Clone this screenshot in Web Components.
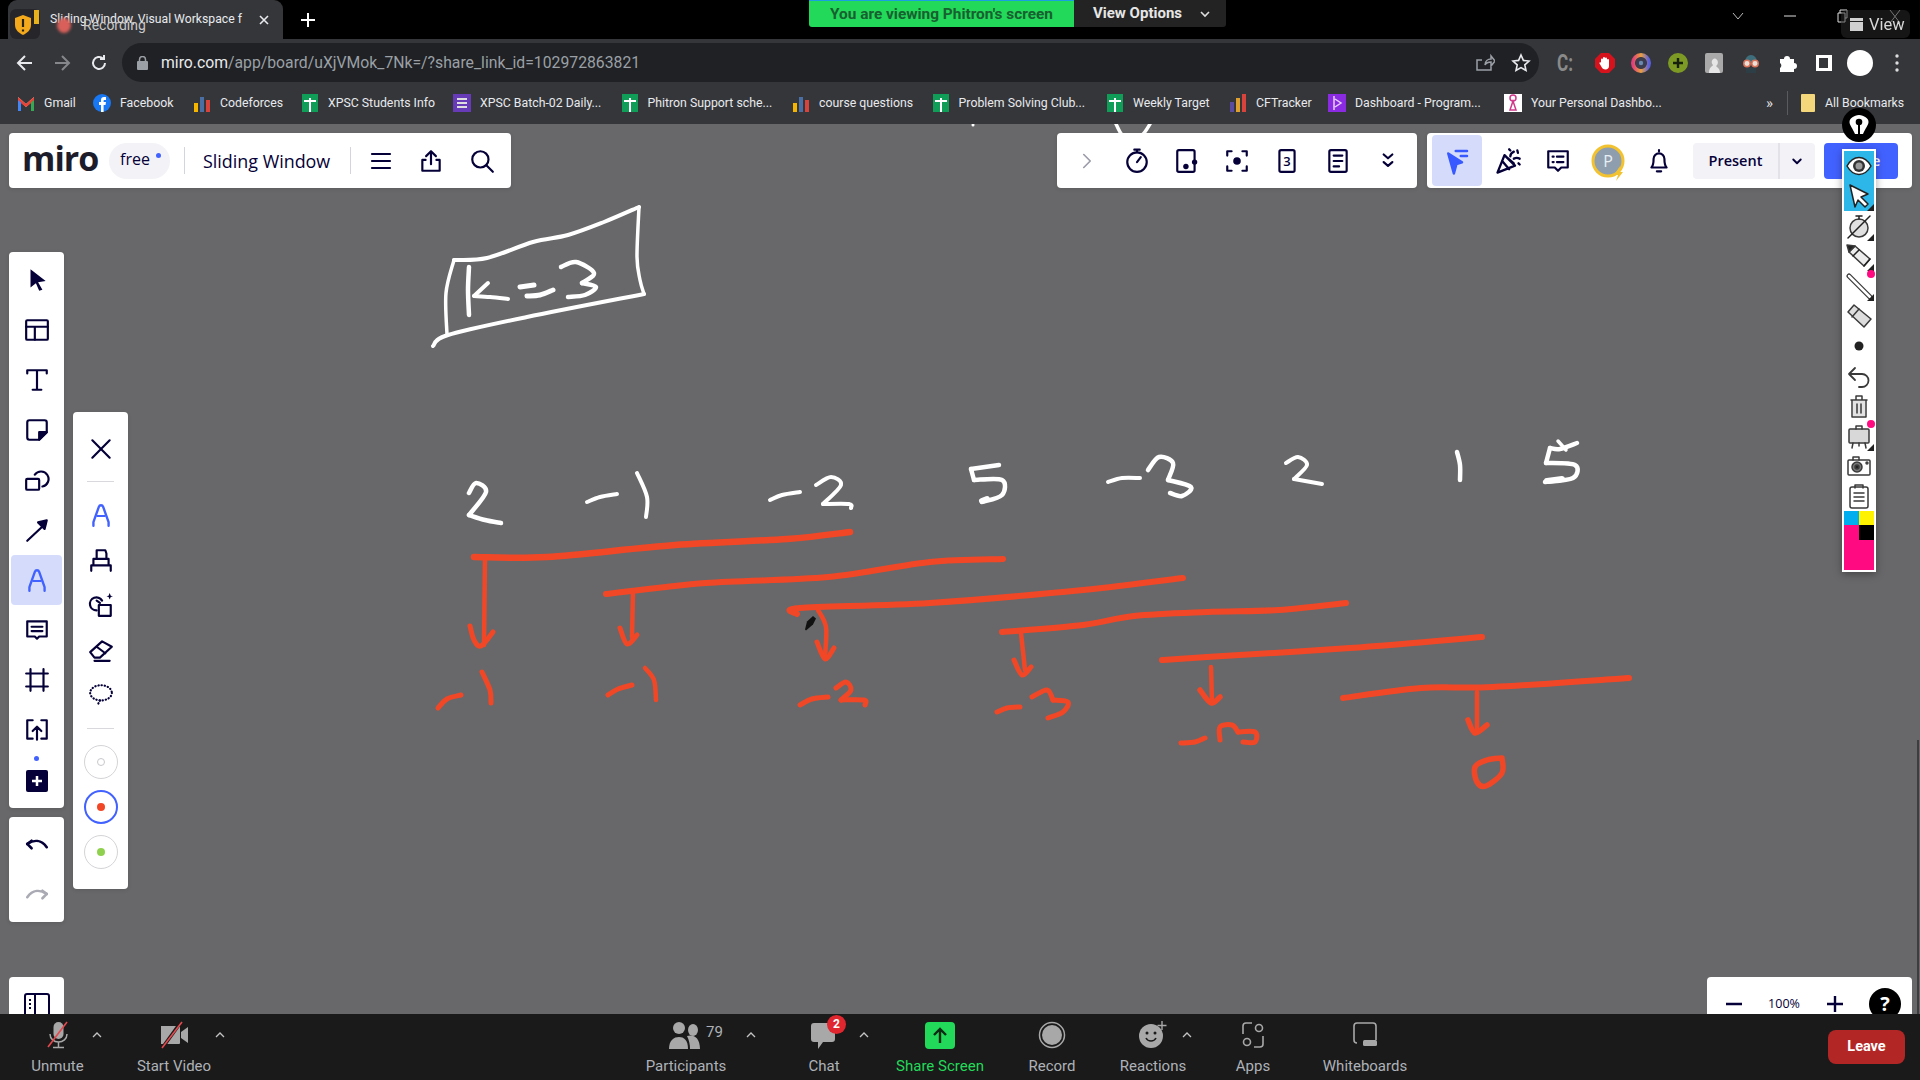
<!DOCTYPE html>
<html>
<head>
<meta charset="utf-8">
<title>Sliding Window</title>
<style>
  html, body { margin: 0; height: 100%; overflow: hidden; background: #000; }
  body { display: flex; flex-direction: column; width: 1920px; height: 1080px; position: relative; font-family: Roboto, "Liberation Sans", sans-serif; }
</style>
</head>
<body>
<chrome-tabstrip></chrome-tabstrip>
<chrome-toolbar></chrome-toolbar>
<chrome-bookmarks></chrome-bookmarks>
<miro-board>
  <board-sketch></board-sketch>
  <miro-title-panel></miro-title-panel>
  <miro-tools-panel></miro-tools-panel>
  <miro-share-panel></miro-share-panel>
  <miro-left-tools></miro-left-tools>
  <miro-pen-panel></miro-pen-panel>
  <miro-corner-panels></miro-corner-panels>
</miro-board>
<zoom-bar></zoom-bar>
<share-banner></share-banner>
<pen-toolbar></pen-toolbar>

<script>
const NAVY = "#050038";
const BLUE = "#4262ff";

// svg helper, all the miro icons are drawn on a 24 box
const svg = (body, size = 26, color = NAVY, sw = 2) =>
  `<svg width="${size}" height="${size}" viewBox="0 0 24 24" fill="none" stroke="${color}" stroke-width="${sw}" stroke-linecap="round" stroke-linejoin="round">${body}</svg>`;

// miro's pen glyph, a round arch with a bar and heavy feet
const penA = `<path d="M5 22v-3.500L10 4.500c.7-2 3.300-2 4 0l5 14V22" stroke="${BLUE}" stroke-width="2.200"/><path d="M8.500 13h7" stroke="${BLUE}" stroke-width="1.800"/>`;

class ChromeTabstrip extends HTMLElement {
  connectedCallback() {
    this.attachShadow({ mode: "open" }).innerHTML = `
      <style>
        :host { display: block; height: 39px; background: #000; position: relative; color: #e8eaed; font-size: 12.200px; flex: none; }
        .tab { position: absolute; left: 8px; top: 0; width: 275px; height: 39px; background: #35363a; border-radius: 9px 9px 0 0; }
        .title { position: absolute; left: 42px; top: 12px; white-space: nowrap; }
        .rec { position: absolute; left: 75px; top: 17px; color: #c9c9c9; font-size: 14px; }
        .dot { position: absolute; left: 49px; top: 18px; width: 14px; height: 15px; border-radius: 50%; background: #d9605a; filter: blur(1.500px); }
        .shield { position: absolute; left: 2px; top: 9px; width: 30px; height: 30px; background: #26262a; border-radius: 6px; }
        .x { position: absolute; left: 249px; top: 13px; }
        .plus { position: absolute; left: 300px; top: 12px; }
        .win { position: absolute; top: 9px; }
      </style>
      <div class="tab">
        <div class="title">Sliding Window, Visual Workspace f</div>
        <div class="dot"></div>
        <div class="rec">Recording</div>
        <div class="shield">
          <svg width="30" height="30" viewBox="0 0 30 30"><path d="M24 1h5v14h-5z" fill="#e8b21c"/><path d="M13 6l8 3v7c0 5-4 8-8 10-4-2-8-5-8-10V9z" fill="#f4a81c"/><path d="M13 10v8M13 20.500v2" stroke="#222" stroke-width="2.200"/></svg>
        </div>
        <svg class="x" width="14" height="14" viewBox="0 0 14 14" stroke="#e8eaed" stroke-width="1.600"><path d="M3 3l8 8M11 3l-8 8"/></svg>
      </div>
      <svg class="plus" width="16" height="16" viewBox="0 0 16 16" stroke="#fff" stroke-width="2"><path d="M8 1v14M1 8h14"/></svg>
      <svg class="win" style="left:1732px" width="12" height="14" viewBox="0 0 12 14" fill="none" stroke="#bbb"><path d="M1 4l5 6 5-6"/></svg>
      <svg class="win" style="left:1784px" width="12" height="14" viewBox="0 0 12 14" stroke="#ddd"><path d="M0 7h12"/></svg>
      <svg class="win" style="left:1837px" width="12" height="14" viewBox="0 0 12 14" fill="none" stroke="#ddd"><path d="M1 4h7v9H1zM3 4V1h7v8H8"/></svg>
      <svg class="win" style="left:1889px" width="12" height="15" viewBox="0 0 12 15" stroke="#bbb"><path d="M1 1l10 13M11 1L1 14"/></svg>
    `;
  }
}

class ChromeToolbar extends HTMLElement {
  connectedCallback() {
    const ext = [
      `<text x="-1" y="18" font-size="23" font-weight="700" fill="#8a8a8a" font-family="Roboto" textLength="16" lengthAdjust="spacingAndGlyphs">C:</text>`,
      `<path d="M6 0h8l6 6v8l-6 6H6l-6-6V6z" fill="#d6131d"/><path d="M6 9V6.500a1 1 0 012 0V5a1 1 0 012 0v.500a1 1 0 012 0V7a1 1 0 012 0v6c0 2-1.500 3.500-3.500 3.500S7 15.500 6 13l-1.500-2.500c-.500-1 .800-1.800 1.500-.800z" fill="#fff"/>`,
      `<circle cx="10" cy="10" r="8" fill="none" stroke="url(#g)" stroke-width="4"/><circle cx="10" cy="10" r="5.500" fill="#3c3c50"/><circle cx="10" cy="10" r="2.200" fill="#6a8ab0"/>`,
      `<circle cx="10" cy="10" r="10" fill="#7d9a24"/><path d="M10 5v10M5 10h10" stroke="#16200a" stroke-width="2.400"/>`,
      `<rect x="1" y="0" width="18" height="20" rx="2" fill="#a9a9a9"/><path d="M5 20c0-6 3-6 4-8-3-3 0-8 3-6 3 2 2 6 0 7 2 2 4 3 4 7z" fill="#e6e6e6"/>`,
      `<path d="M4 9a6 7 0 0112 0z" fill="#3e6e7c"/><circle cx="6" cy="10.500" r="3.200" fill="#e8e0d8" stroke="#d9725a" stroke-width="1.500"/><circle cx="14" cy="10.500" r="3.200" fill="#e8e0d8" stroke="#d9725a" stroke-width="1.500"/><path d="M5 15h10v5H5z" fill="#2e3e46"/>`,
      `<path d="M3 6h4a3 3 0 016 0h4v4a3 3 0 010 6v3H3v-4a3 3 0 000-5z" fill="#fff"/>`,
      `<rect x="2" y="2" width="16" height="16" fill="#fff"/><rect x="5" y="5" width="9" height="10" fill="#35363a"/>`,
      `<circle cx="10" cy="10" r="13" fill="#fff"/>`,
      `<circle cx="10" cy="3" r="1.700" fill="#ddd"/><circle cx="10" cy="10" r="1.700" fill="#ddd"/><circle cx="10" cy="17" r="1.700" fill="#ddd"/>`,
    ];
    this.attachShadow({ mode: "open" }).innerHTML = `
      <style>
        :host { display: flex; align-items: center; height: 43px; background: #35363a; flex: none; box-sizing: border-box; padding: 4px 0 0 6px; }
        .nav { width: 37px; flex: none; display: flex; justify-content: center; }
        .url { flex: none; margin-left: 5px; width: 1417px; height: 39px; border-radius: 20px; background: #202124; display: flex; align-items: center; box-sizing: border-box; padding: 0 15px; font-size: 15.750px; color: #9aa0a6; white-space: nowrap; }
        .url b { font-weight: 400; color: #e8eaed; }
        .url svg.lock { margin-right: 13px; flex: none; }
        .end { margin-left: auto; display: flex; gap: 16.500px; align-items: center; margin-right: -7px; }
        .exts { display: flex; flex: none; margin-left: 19px; gap: 16.500px; }
        .exts svg { overflow: visible; display: block; }
      </style>
      <div class="nav"><svg width="18" height="18" viewBox="0 0 18 18" fill="none" stroke="#e8eaed" stroke-width="2"><path d="M16 9H2M9 2L2 9l7 7"/></svg></div>
      <div class="nav"><svg width="18" height="18" viewBox="0 0 18 18" fill="none" stroke="#85878b" stroke-width="2"><path d="M2 9h14M9 2l7 7-7 7"/></svg></div>
      <div class="nav"><svg width="18" height="18" viewBox="0 0 18 18" fill="none" stroke="#e8eaed" stroke-width="2"><path d="M15 9a6 6 0 11-2-4.500M14 1v4h-4"/></svg></div>
      <div class="url">
        <svg class="lock" width="11" height="14" viewBox="0 0 11 14" fill="#9aa0a6"><rect x="0" y="5" width="11" height="9" rx="1"/><path d="M2.500 5V3.500a3 3 0 016 0V5" fill="none" stroke="#9aa0a6" stroke-width="1.500"/></svg>
        <span><b>miro.com</b>/app/board/uXjVMok_7Nk=/?share_link_id=102972863821</span>
        <div class="end">
          <svg width="20" height="20" viewBox="0 0 20 20" fill="none" stroke="#9aa0a6" stroke-width="1.500"><path d="M16 12v5H2V7h5M10 12c0-4 3-6 6-6V3l4 5-4 5V9c-3 0-5 1-6 3z"/></svg>
          <svg width="20" height="20" viewBox="0 0 20 20" fill="none" stroke="#e8eaed" stroke-width="1.600"><path d="M10 2l2.400 5.400 5.600.6-4.200 3.800 1.200 5.700L10 14.600 5 17.500l1.200-5.700L2 8l5.600-.6z"/></svg>
        </div>
      </div>
      <div class="exts">
        <svg width="20" height="20"><defs><linearGradient id="g"><stop offset="0" stop-color="#e0407a"/><stop offset=".5" stop-color="#e8a040"/><stop offset="1" stop-color="#5a60e0"/></linearGradient></defs>${ext[0]}</svg>
        ${ext.slice(1).map((e) => `<svg width="20" height="20">${e}</svg>`).join("")}
      </div>
    `;
  }
}

class ChromeBookmarks extends HTMLElement {
  connectedCallback() {
    const sheet = `<rect x="1" width="16" height="18" fill="#0f9d58"/><path d="M9 4v14M3 7h12" stroke="#fff" stroke-width="2"/>`;
    const bars = `<rect x="1" y="9" width="4" height="9" fill="#f4b400"/><rect x="7" y="3" width="4" height="15" fill="#4a6fa5"/><rect x="13" y="6" width="4" height="12" fill="#d8433b"/>`;
    const icons = {
      gmail: `<path d="M1 17V3l8 7 8-7v14h-3V8l-5 5-5-5v9z" fill="#e0e0e0"/><path d="M1 3l8 7 8-7v4l-8 6-8-6z" fill="#ea4335"/><path d="M1 6l3 2.500V17H1z" fill="#4285f4"/><path d="M17 6l-3 2.500V17h3z" fill="#34a853"/>`,
      fb: `<circle cx="9" cy="9" r="9" fill="#1877f2"/><path d="M8 18v-7H6V8h2V6c0-2 1-3 3-3h2v3h-1.500c-.7 0-.9.400-.9 1v1H13l-.5 3h-1.900v7z" fill="#fff"/>`,
      sheet, bars,
      form: `<rect x="0" width="18" height="18" fill="#673ab7"/><path d="M4 5h10M4 9h10M4 13h10" stroke="#ddd" stroke-width="2"/>`,
      cf: `<rect x="1" y="8" width="4" height="10" fill="#5a4aa0"/><rect x="7" y="4" width="4" height="14" fill="#e0a030"/><rect x="13" y="0" width="4" height="18" fill="#d8433b"/>`,
      dash: `<rect width="18" height="18" fill="#8a2be2"/><path d="M6 2v14M7 5l6 4-6 4" stroke="#e8d0ff" stroke-width="1.500" fill="none"/>`,
      you: `<rect width="18" height="18" fill="#fff"/><circle cx="9" cy="4" r="3" fill="none" stroke="#d0388a" stroke-width="1.500"/><path d="M9 7l-3 9h6z" fill="none" stroke="#d0388a" stroke-width="1.500"/>`,
      folder: `<rect x="1" width="14" height="18" rx="1" fill="#f5d77b"/>`,
    };
    const items = [
      ["Gmail", "gmail", 76], ["Facebook", "fb", 100], ["Codeforces", "bars", 108],
      ["XPSC Students Info", "sheet", 152], ["XPSC Batch-02 Daily...", "form", 167.5],
      ["Phitron Support sche...", "sheet", 171.5], ["course questions", "bars", 139.6],
      ["Problem Solving Club...", "sheet", 174.4], ["Weekly Target", "sheet", 123],
      ["CFTracker", "cf", 99], ["Dashboard - Program...", "dash", 176], ["Your Personal Dashbo...", "you", 262],
    ];
    this.attachShadow({ mode: "open" }).innerHTML = `
      <style>
        :host { display: flex; align-items: center; height: 42px; background: #35363a; color: #e8eaed; font-size: 12.300px; padding-left: 17px; flex: none; white-space: nowrap; }
        .b { display: flex; align-items: center; gap: 9px; flex: none; }
        svg { flex: none; display: block; }
        .more { font-size: 15px; color: #ddd; width: 21px; flex: none; }
        .sep { width: 1px; height: 24px; background: #5a5b5f; margin-right: 12px; flex: none; }
      </style>
      ${items.map(([t, i, w]) => `<div class="b" style="width:${w}px"><svg width="18" height="18">${icons[i]}</svg><span>${t}</span></div>`).join("")}
      <div class="more">»</div><div class="sep"></div>
      <div class="b"><svg width="16" height="18">${icons.folder}</svg><span>All Bookmarks</span></div>
    `;
  }
}

class MiroBoard extends HTMLElement {
  connectedCallback() {
    this.attachShadow({ mode: "open" }).innerHTML = `
      <style>
        :host { display: block; flex: 1; position: relative; overflow: hidden; background: #68686a; }
        .scroll { position: absolute; right: 1px; top: 616px; width: 2px; height: 274px; background: #3d3d3f; }
      </style>
      <slot></slot><div class="scroll"></div>
    `;
  }
}

// freehand ink of the board, stored as the sampled pen points in page coordinates
class BoardSketch extends HTMLElement {
  connectedCallback() {
    const W = "#fff", R = "#f24726";
    const strokes = [
      [W, 4, [[433,346],[448,335],[527,317],[644,294]]],
      [W, 3.5, [[644,294],[640,280],[637,257],[639,207]]],
      [W, 4, [[639,207],[604,222],[568,235],[533,242],[487,258],[454,260]]],
      [W, 3.5, [[454,260],[446,293],[447,335]]],
      [W, 4.5, [[469,267],[468,290],[469,315]]], [W, 4, [[488,283],[474,296]]], [W, 4, [[474,296],[490,297],[508,299]]],
      [W, 5, [[520,287],[534,285]]], [W, 5, [[527,296],[540,295],[553,290]]],
      [W, 4.5, [[561,267],[576,262],[594,273],[582,283]]], [W, 4.5, [[582,283],[596,287],[585,295],[568,297]]],
      [W, 4.5, [[469,493],[476,483],[486,492],[469,515]]], [W, 4.5, [[469,515],[485,520],[501,523]]],
      [W, 4, [[587,502],[600,497],[617,494]]], [W, 4, [[637,473],[647,497],[646,517]]],
      [W, 4, [[770,500],[782,495],[800,492]]], [W, 4, [[816,485],[831,477],[841,485],[823,504]]], [W, 4, [[823,504],[849,504],[851,508]]],
      [W, 4.5, [[999,465],[971,469]]], [W, 4.5, [[971,469],[974,480]]], [W, 4.5, [[974,480],[1002,480],[1002,495],[982,502]]], [W, 6, [[982,501],[987,499]]],
      [W, 4, [[1108,482],[1122,478],[1140,478]]], [W, 4.5, [[1148,470],[1159,457],[1173,463],[1168,480]]], [W, 4.5, [[1168,480],[1191,487],[1182,496],[1170,493]]],
      [W, 4, [[1286,463],[1298,457],[1307,465],[1294,479]]], [W, 4, [[1294,479],[1322,484]]],
      [W, 4.5, [[1457,452],[1460,465],[1460,480]]],
      [W, 4.5, [[1577,443],[1560,449],[1550,448]]], [W, 4.5, [[1550,448],[1546,463]]], [W, 4.5, [[1546,463],[1575,465],[1573,478],[1545,482]]], [W, 6, [[1547,481],[1562,479]]], [W, 3.5, [[1558,441],[1566,450]]],
      [W, 3.5, [[1116,124],[1122,135],[1130,139],[1142,135],[1150,124]]],
      [R, 6.5, [[474,557],[547,557],[675,545],[787,539],[850,532]]],
      [R, 4.5, [[485,557],[484,645]]], [R, 5, [[470,626],[474,640],[481,646],[493,632]]],
      [R, 6, [[606,594],[706,583],[828,577],[930,562],[1003,559]]],
      [R, 4.5, [[633,592],[632,637]]], [R, 5, [[620,628],[627,644],[637,635]]],
      [R, 6, [[797,614],[800,608],[930,603],[1083,590],[1183,578]]],
      [R, 4.5, [[818,610],[826,627],[825,657]]], [R, 5, [[817,642],[825,659],[834,648]]],
      [R, 6, [[1002,632],[1083,625],[1134,616],[1207,612],[1279,610],[1346,603]]],
      [R, 4.5, [[1021,633],[1025,670]]], [R, 5, [[1014,660],[1022,675],[1031,667]]],
      [R, 6, [[1162,660],[1207,657],[1350,648],[1482,637]]],
      [R, 4.5, [[1211,667],[1212,702]]], [R, 5.5, [[1200,690],[1211,703],[1220,697]]],
      [R, 6, [[1343,698],[1421,688],[1493,687],[1629,678]]],
      [R, 4.5, [[1477,692],[1477,732]]], [R, 5.5, [[1468,720],[1475,733],[1487,725]]],
      [R, 5.5, [[1502,758],[1487,760],[1475,767],[1477,782],[1486,786],[1502,773],[1502,758]]],
      [R, 5, [[438,708],[447,699],[461,695]]], [R, 5, [[482,672],[490,690],[491,703]]],
      [R, 5, [[608,695],[618,689],[632,685]]], [R, 4.5, [[645,668],[654,680],[656,700]]],
      [R, 5, [[800,705],[812,699],[828,697]]], [R, 5, [[836,688],[846,682],[851,690],[841,700]]], [R, 5, [[841,700],[864,700],[865,705]]],
      [R, 5, [[997,712],[1007,708],[1020,707]]], [R, 5, [[1032,697],[1047,690],[1053,700]]], [R, 5, [[1053,700],[1068,702],[1063,712],[1048,718]]],
      [R, 5, [[1181,743],[1195,742],[1205,738]]], [R, 5, [[1220,740],[1220,727],[1232,725],[1238,732]]], [R, 5, [[1238,732],[1255,732],[1255,742],[1243,742]]],
    ];
    const smooth = (p) => {
      let d = `M${p[0][0]} ${p[0][1]}`;
      for (let i = 0; i < p.length - 1; i++) {
        const a = p[i - 1] || p[i], b = p[i], c = p[i + 1], e = p[i + 2] || c;
        d += `C${b[0] + (c[0] - a[0]) / 6} ${b[1] + (c[1] - a[1]) / 6} ${c[0] - (e[0] - b[0]) / 6} ${c[1] - (e[1] - b[1]) / 6} ${c[0]} ${c[1]}`;
      }
      return d;
    };
    this.attachShadow({ mode: "open" }).innerHTML = `
      <style>:host { position: absolute; inset: 0; display: block; } svg { display: block; }</style>
      <svg width="1920" height="890" viewBox="0 124 1920 890" fill="none" stroke-linecap="round" stroke-linejoin="round">
        ${strokes.map(([c, w, p]) => `<path d="${smooth(p)}" stroke="${c}" stroke-width="${w}"/>`).join("")}
        <circle cx="973" cy="125" r="1.500" fill="#fff"/>
        <path d="M813 616l3 2.500-3 6-7 6-1-1 2-8z" fill="#111"/>
      </svg>
    `;
  }
}

const PANEL = `
  :host { position: absolute; display: flex; background: #fff; border-radius: 4px; box-sizing: border-box; color: ${NAVY}; font-family: "Open Sans", sans-serif; box-shadow: 0 1px 4px rgba(0,0,0,.12); }
  .c { display: flex; align-items: center; justify-content: center; flex: none; }
  svg { display: block; }
`;

class MiroTitlePanel extends HTMLElement {
  connectedCallback() {
    this.attachShadow({ mode: "open" }).innerHTML = `
      <style>${PANEL}
        :host { left: 9px; top: 9px; width: 502px; height: 55px; align-items: center; padding-left: 13px; }
        .logo { width: 74px; font-size: 34px; font-weight: 700; letter-spacing: -1px; line-height: 40px; color: #1c1c2b; margin-top: -5px; }
        .pill { margin-left: 13px; width: 61px; height: 36px; background: #f3f3f7; border-radius: 18px; box-sizing: border-box; padding-left: 11px; font-size: 16px; line-height: 33px; position: relative; }
        .pill i { position: absolute; left: 47px; top: 10px; width: 5px; height: 5px; border-radius: 50%; background: ${BLUE}; }
        .sep { width: 1px; height: 27px; background: #d4d4dc; margin-left: 14px; }
        .name { margin-left: 18px; width: 128px; font-size: 17.900px; white-space: nowrap; }
      </style>
      <div class="logo">miro</div>
      <div class="pill">free<i></i></div>
      <div class="sep"></div>
      <div class="name">Sliding Window</div>
      <div class="sep" style="margin-left:19px"></div>
      <div class="c" style="margin-left:18px;width:24px">${svg(`<path d="M3 5h18M3 12h18M3 19h18"/>`, 26, NAVY, 2.200)}</div>
      <div class="c" style="margin-left:25px;width:26px">${svg(`<path d="M12 15V3M7.500 7.500L12 3l4.500 4.500M7 11H4v10h16V11h-3"/>`)}</div>
      <div class="c" style="margin-left:25px;width:26px">${svg(`<circle cx="10.500" cy="10.500" r="7.500"/><path d="M16 16l6 6"/>`)}</div>
    `;
  }
}

class MiroToolsPanel extends HTMLElement {
  connectedCallback() {
    const ics = [
      `<path d="M9 9l6 6-6 6" transform="translate(0 -3)" stroke="#9a9aa8" stroke-width="1.500"/>`,
      `<circle cx="12" cy="13" r="9"/><path d="M12 4V1.500M9.500 1.500h5M12 13l3.500-4.500"/>`,
      `<rect x="3" y="2" width="16" height="20" rx="1.500"/><circle cx="19" cy="13" r="2.500" fill="${NAVY}" stroke="none"/><circle cx="11" cy="17" r="2.500" fill="${NAVY}" stroke="none"/>`,
      `<path d="M3 7V3h4M17 3h4v4M21 17v4h-4M7 21H3v-4"/><circle cx="12" cy="12" r="3.500" fill="${NAVY}" stroke="none"/>`,
      `<rect x="5" y="2" width="14" height="20" rx="1.500"/><text x="12" y="17" font-family="Open Sans" font-size="12" font-weight="600" text-anchor="middle" fill="${NAVY}" stroke="none">3</text>`,
      `<rect x="4" y="2" width="16" height="20" rx="1.500"/><path d="M8 7h8M8 12h8M8 17h5"/>`,
      `<path d="M8 5l4 3.500L16 5M8 12l4 3.500 4-3.500" transform="translate(0 1)"/>`,
    ];
    this.attachShadow({ mode: "open" }).innerHTML = `
      <style>${PANEL}
        :host { left: 1057px; top: 9px; width: 360px; height: 55px; align-items: center; padding-left: 5px; }
        .c { width: 50.100px; }
      </style>
      ${ics.map((i) => `<div class="c">${svg(i)}</div>`).join("")}
    `;
  }
}

class MiroSharePanel extends HTMLElement {
  connectedCallback() {
    this.attachShadow({ mode: "open" }).innerHTML = `
      <style>${PANEL}
        :host { left: 1427px; top: 9px; width: 485px; height: 55px; align-items: center; padding-left: 5px; }
        .c { width: 50.400px; height: 51px; border-radius: 4px; }
        .on { background: #d5dcfb; }
        .present { flex: none; margin-left: 9px; width: 122px; height: 36px; background: #f3f3f7; border-radius: 4px; display: flex; align-items: center; font-size: 14.500px; font-weight: 600; }
        .present span { width: 85px; text-align: center; border-right: 2px solid #e2e2e8; line-height: 36px; }
        .present div { flex: 1; display: flex; justify-content: center; }
        .share { flex: none; margin-left: 9px; width: 74px; height: 36px; background: ${BLUE}; border-radius: 4px; color: #fff; font-size: 14px; font-weight: 600; line-height: 36px; text-align: center; }
      </style>
      <div class="c on">${svg(`<path d="M5 6l11 7-4.500 1.500L9.500 22z" fill="#3859ff" stroke="#3859ff"/><path d="M11 4h9M15 8h5" stroke="#3859ff"/>`, 30)}</div>
      <div class="c">${svg(`<path d="M3 22L9 7l9 9zM7 12l6 7M11 9l6 5"/><path d="M14 8c0-2 1-3 3-4M17 10c2-1 3-1 5 0M13 2l1 1M20 3l.5 2M21 14l1 1"/>`, 28)}</div>
      <div class="c">${svg(`<path d="M3 3h18v15h-6l-3 3-3-3H3z"/><path d="M7 8h1M11 8h6M7 13h1M11 13h6"/>`)}</div>
      <div class="c">
        <svg width="34" height="40" viewBox="0 0 34 40"><circle cx="17" cy="20" r="15" fill="#8e9eae" stroke="#f2c230" stroke-width="3"/><text x="17" y="26" font-family="Open Sans" font-size="16" text-anchor="middle" fill="#e8eef2">P</text><path d="M29 25l-6 9h4l-2 6 7-9h-4z" fill="#f2c230"/></svg>
      </div>
      <div class="c">${svg(`<path d="M5 18c2-2 2-4 2-8a5 5 0 0110 0c0 4 0 6 2 8zM10 21.500h4M12 3V2"/>`)}</div>
      <div class="present"><span>Present</span><div>${svg(`<path d="M7 10l5 5 5-5"/>`, 18, NAVY, 2.500)}</div></div>
      <div class="share">Share</div>
    `;
  }
}

class MiroLeftTools extends HTMLElement {
  connectedCallback() {
    const ics = [
      `<path d="M6 2l14 11-7 1 4 7-3 1-3-7-5 4z" fill="${NAVY}" stroke="none"/>`,
      `<rect x="2" y="3" width="20" height="18" rx="1"/><path d="M2 9h20M10 9v12"/>`,
      `<path d="M3 6V3h18v3M12 3v18M8 21h8"/>`,
      `<path d="M21 14V5a2 2 0 00-2-2H5a2 2 0 00-2 2v14a2 2 0 002 2h9z"/><path d="M21 14h-7v7z" fill="${NAVY}"/>`,
      `<rect x="2" y="11" width="12" height="10" rx="1"/><path d="M10 7a7 7 0 117 11"/>`,
      `<path d="M3 22L20 6"/><path d="M21 3l-8 2 6 6z" fill="${NAVY}"/>`,
      penA,
      `<path d="M3 4h18v14h-7l-2 2-2-2H3z"/><path d="M7 9h10M7 13h10"/>`,
      `<path d="M6 2v20M18 2v20M2 6h20M2 18h20"/>`,
      `<path d="M8 3H3v17h5M16 3h5v17h-5M12 21V9M8 13l4-4 4 4"/>`,
    ];
    this.attachShadow({ mode: "open" }).innerHTML = `
      <style>
        :host { position: absolute; inset: 0; display: block; pointer-events: none; }
        .p { position: absolute; background: #fff; border-radius: 4px; left: 9px; width: 55px; box-sizing: border-box; box-shadow: 0 1px 4px rgba(0,0,0,.12); }
        .c { height: 50px; display: flex; align-items: center; justify-content: center; position: relative; }
        svg { display: block; }
        .on::before { content: ""; position: absolute; left: 2px; right: 2px; top: 0; bottom: 0; background: #d5dcfb; border-radius: 4px; }
        .on svg { position: relative; }
        .plus i { position: absolute; left: 25px; top: 1px; width: 5px; height: 5px; border-radius: 50%; background: ${BLUE}; }
      </style>
      <div class="p" style="top:128px;height:556px;padding-top:3px">
        ${ics.map((i, n) => `<div class="c ${n === 6 ? "on" : ""}">${svg(i)}</div>`).join("")}
        <div class="c plus"><i></i><svg width="24" height="24" viewBox="0 0 24 24"><rect x="1" y="2" width="22" height="22" rx="2" fill="${NAVY}"/><path d="M12 8v10M7 13h10" stroke="#fff" stroke-width="2.500"/></svg></div>
      </div>
      <div class="p" style="top:693px;height:105px;padding-top:3px">
        <div class="c">${svg(`<path d="M3 11l4 4M3 11l4-3"/><path d="M3 11c6-4 13-4 18 3"/>`, 26, NAVY, 2.400)}</div>
        <div class="c">${svg(`<path d="M21 11l-4 4M21 11l-4-3"/><path d="M21 11c-6-4-13-4-18 3"/>`, 26, "#aaaab4", 2.400)}</div>
      </div>
    `;
  }
}

class MiroPenPanel extends HTMLElement {
  connectedCallback() {
    const sw = (dot, ring, rw, dc) => `<div class="c"><span class="ring" style="border:${rw}px solid ${ring}"><i style="background:${dot};${dc || ""}"></i></span></div>`;
    this.attachShadow({ mode: "open" }).innerHTML = `
      <style>${PANEL}
        :host { left: 73px; top: 288px; width: 55px; height: 477px; flex-direction: column; padding-top: 13px; }
        .c { height: 45px; }
        .x { height: 48px; }
        .sep { height: 1px; background: #d9d9dd; margin: 8px 14px 10px; flex: none; }
        .ring { width: 34px; height: 34px; border-radius: 50%; box-sizing: border-box; display: flex; align-items: center; justify-content: center; }
        .ring i { width: 8px; height: 8px; border-radius: 50%; box-sizing: border-box; }
      </style>
      <div class="c x">${svg(`<path d="M4 4l16 16M20 4L4 20"/>`, 26)}</div>
      <div class="sep"></div>
      <div class="c">${svg(penA)}</div>
      <div class="c">${svg(`<path d="M3 22v-5h18v5M5 17v-6h14v6M8 11V3h8l1 3v5"/>`)}</div>
      <div class="c">${svg(`<path d="M8 17a6 6 0 115-9"/><path d="M10 12h11v10H10zM8 8l3 2"/><path d="M20 1l1 2.500 2 .5-2 .5-1 2.500-1-2.500-2-.5 2-.5z" fill="${NAVY}" stroke="none"/>`)}</div>
      <div class="c">${svg(`<path d="M2 14L13 4l9 5-11 10H6zM8 9l8 6M6 22h14"/>`)}</div>
      <div class="c">${svg(`<ellipse cx="12" cy="10" rx="10" ry="7" stroke-dasharray="0.300 2.600"/><path d="M11 17l-2 4" stroke-dasharray="0.300 2.600"/>`)}</div>
      <div class="sep" style="margin:11px 14px 10px"></div>
      ${sw("#fff", "#d4d4d8", 1, "border:1px solid #c8c8cc")}
      ${sw("#f24726", BLUE, 2)}
      ${sw("#8fd14f", "#d4d4d8", 1)}
    `;
  }
}

class MiroCornerPanels extends HTMLElement {
  connectedCallback() {
    this.attachShadow({ mode: "open" }).innerHTML = `
      <style>
        :host { position: absolute; inset: 0; display: block; pointer-events: none; color: ${NAVY}; font-family: "Open Sans", sans-serif; }
        .p { position: absolute; top: 853px; height: 37px; background: #fff; border-radius: 4px 4px 0 0; box-sizing: border-box; display: flex; align-items: flex-start; overflow: hidden; }
        svg { display: block; }
        .zoom { left: 1707px; width: 205px; font-size: 12.500px; padding-top: 11px; }
        .zoom > * { flex: none; }
        .q { width: 32px; height: 32px; box-sizing: border-box; padding-top: 6px; border-radius: 50%; background: #000; color: #fff; font-weight: 700; font-size: 20px; line-height: 20px; text-align: center; margin-left: 25.500px; }
      </style>
      <div class="p" style="left:9px;width:55px;padding:15px 0 0 15px">
        <svg width="26" height="26" viewBox="0 0 26 26" fill="none" stroke="#050038" stroke-width="2"><rect x="1" y="2" width="24" height="24" rx="2"/><path d="M11 2v24M5 8h2M5 12h2M5 16h2"/></svg>
      </div>
      <div class="p zoom">
        <svg style="margin:8px 0 0 18px" width="18" height="16" viewBox="0 0 18 16" stroke="#050038" stroke-width="2.400"><path d="M1 8h16"/></svg>
        <div style="width:60px;margin-left:11px;text-align:center;line-height:32px">100%</div>
        <svg style="margin:7px 0 0 11.500px" width="18" height="18" viewBox="0 0 18 18" stroke="#050038" stroke-width="2.400"><path d="M1 9h16M9 1v16"/></svg>
        <div class="q">?</div>
      </div>
    `;
  }
}

class ZoomBar extends HTMLElement {
  connectedCallback() {
    const G = "#a8a8a8";
    const slash = `<path d="M5 26L24 1" stroke="#e5484d" stroke-width="1.600"/>`;
    const caret = (ml) => `<div class="caret" style="margin-left:${ml}px"><svg width="12" height="12" viewBox="0 0 12 12" fill="none" stroke="#c4c4c4" stroke-width="1.300"><path d="M2 8l4-4 4 4"/></svg></div>`;
    const item = (ml, w, label, icon, cls = "") => `<div class="it ${cls}" style="margin-left:${ml}px;width:${w}px"><div class="ic">${icon}</div><span>${label}</span></div>`;
    const s28 = (b) => `<svg width="30" height="28" viewBox="0 0 30 28" fill="none">${b}</svg>`;
    this.attachShadow({ mode: "open" }).innerHTML = `
      <style>
        :host { display: flex; height: 66px; background: #1a1a1a; flex: none; color: #aeb2b8; font-size: 15px; position: relative; }
        .it { display: flex; flex-direction: column; align-items: center; padding-top: 7px; flex: none; white-space: nowrap; }
        .it span { margin-top: 8px; line-height: 18px; }
        .ic { height: 28px; display: flex; align-items: center; position: relative; }
        .caret { width: 20px; height: 28px; margin-top: 7px; display: flex; align-items: center; justify-content: center; flex: none; }
        .green { color: #23d959; }
        .badge { position: absolute; left: 16px; top: -6px; width: 19px; height: 19px; border-radius: 50%; background: #e0262e; color: #fff; font-size: 12px; font-weight: 700; text-align: center; line-height: 19px; }
        .count { margin-left: 6px; font-size: 15px; }
        .leave { margin: 16px 15px 0 auto; width: 77px; height: 34px; background: #b32626; color: #fff; border-radius: 8px; text-align: center; font-weight: 700; line-height: 34px; font-size: 14.500px; flex: none; }
      </style>
      ${item(30, 55, "Unmute", s28(`<rect x="10.500" y="1" width="10" height="17" rx="5" fill="${G}"/><path d="M7 13c0 5 4 8 8.500 8s8.500-3 8.500-8M15.500 21v5M10 26.500h11" stroke="${G}" stroke-width="1.500"/>${slash}`))}
      ${caret(2)}
      ${item(29, 76, "Start Video", s28(`<path d="M2 5h18a1 1 0 011 1v16a1 1 0 01-1 1H2z" fill="${G}"/><path d="M22 11l7-5v16l-7-5z" fill="${G}"/><path d="M4 26L22 1" stroke="#1a1a1a" stroke-width="3.500"/><path d="M3 27L23 1" stroke="#e5484d" stroke-width="1.600"/>`))}
      ${caret(-2)}
      <div class="it" style="margin-left:416px;width:80px"><div class="ic" style="padding-left:20px"><svg width="31" height="28" viewBox="0 0 31 28" fill="${G}"><circle cx="10" cy="7" r="6"/><ellipse cx="24" cy="9" rx="5" ry="6"/><path d="M0 28c0-9 5-12 10-12s9 3 9 12z"/><path d="M18 15c6-2 13 1 13 13H21c0-5-1-9-3-13z"/></svg><span class="count" style="margin-top:-6px">79</span></div><span>Participants</span></div>
      ${caret(15)}
      <div class="it" style="margin-left:43px;width:40px"><div class="ic"><svg width="26" height="28" viewBox="0 0 26 28" fill="${G}"><path d="M3 2h18a3 3 0 013 3v13a3 3 0 01-3 3H12l-5 7v-7H3a3 3 0 01-3-3V5a3 3 0 013-3z"/></svg><div class="badge">2</div></div><span>Chat</span></div>
      ${caret(10)}
      ${item(21, 90, "Share Screen", `<svg width="30" height="28" viewBox="0 0 30 28"><rect width="30" height="27" y="1" rx="4" fill="#23d959"/><path d="M15 22V8M9 14l6-6 6 6" fill="none" stroke="#0b2a14" stroke-width="2.400"/></svg>`, "green")}
      ${item(42, 50, "Record", `<svg width="28" height="28" viewBox="0 0 28 28"><circle cx="14" cy="14" r="12.500" fill="none" stroke="${G}" stroke-width="1.500"/><circle cx="14" cy="14" r="10" fill="${G}"/></svg>`)}
      ${item(43, 66, "Reactions", `<svg width="28" height="28" viewBox="0 0 28 28"><circle cx="12" cy="15" r="12" fill="${G}"/><circle cx="8" cy="12" r="1.500" fill="#1a1a1a"/><circle cx="16" cy="12" r="1.500" fill="#1a1a1a"/><path d="M7 17c2 4 8 4 10 0" fill="none" stroke="#1a1a1a" stroke-width="1.600"/><path d="M23 0v9M18.500 4.500h9" stroke="${G}" stroke-width="1.400"/></svg>`)}
      ${caret(-9)}
      ${item(38, 36, "Apps", `<svg width="24" height="26" viewBox="0 0 24 26" fill="none" stroke="${G}" stroke-width="1.600"><path d="M2 12V4a3 3 0 013-3h6M22 14v8a3 3 0 01-3 3h-6"/><circle cx="18" cy="6" r="3.500"/><circle cx="6" cy="20" r="3.500"/></svg>`)}
      ${item(50, 88, "Whiteboards", `<svg width="26" height="26" viewBox="0 0 26 26" fill="none" stroke="${G}" stroke-width="1.600"><path d="M5 21a3 3 0 01-3-3V4a3 3 0 013-3h16a3 3 0 013 3v14"/><rect x="11" y="18" width="14" height="6" rx="1.500" fill="${G}" stroke="none"/></svg>`)}
      <div class="leave">Leave</div>
    `;
  }
}

// things that zoom's share view lays over the captured screen
class ShareBanner extends HTMLElement {
  connectedCallback() {
    this.attachShadow({ mode: "open" }).innerHTML = `
      <style>
        :host { position: absolute; left: 809px; top: 0; display: flex; height: 27px; font-size: 15px; font-weight: 700; line-height: 27px; }
        .g { width: 265px; background: #23d959; color: #17602f; text-align: center; border-radius: 0 0 0 3px; border-top: 1px solid #1aa0e0; box-sizing: border-box; line-height: 27px; font-size: 15.400px; }
        .o { width: 152px; background: #232323; color: #e6e6e6; border-radius: 0 0 3px 0; display: flex; padding-left: 19px; box-sizing: border-box; align-items: center; gap: 18px; }
        .view { position: fixed; left: 1841px; top: 10px; width: 69px; height: 28px; background: rgba(44,44,44,.5); border-radius: 6px; font-weight: 400; color: #d8d8d8; font-size: 16.500px; display: flex; align-items: center; gap: 6px; padding-left: 9px; box-sizing: border-box; }
        .view i { width: 13px; height: 13px; background: linear-gradient(#d0d0d0 3px, #222 3px, #222 4px, #d0d0d0 4px); flex: none; }
      </style>
      <div class="g">You are viewing Phitron's screen</div>
      <div class="o">View Options <svg width="10" height="8" viewBox="0 0 10 8" fill="none" stroke="#ddd" stroke-width="1.600"><path d="M1 2l4 4 4-4"/></svg></div>
      <div class="view"><i></i>View</div>
    `;
  }
}

class PenToolbar extends HTMLElement {
  connectedCallback() {
    const S = "#3a3a3a";
    const ic = (b) => `<svg width="26" height="26" viewBox="0 0 26 26" fill="none" stroke="${S}" stroke-width="1.500" stroke-linejoin="round" stroke-linecap="round">${b}</svg>`;
    const tri = `<b class="tri"></b>`, pink = `<b class="pink"></b>`;
    const cells = [
      [`<path d="M1 13C5 6 9 4.500 13 4.500S21 6 25 13c-4 7-8 8.500-12 8.500S5 20 1 13z" fill="#fff" stroke="#222"/><circle cx="13" cy="13" r="6" fill="#333" stroke="none"/><circle cx="13" cy="13" r="3.500" fill="#999" stroke="none"/>`, "a"],
      [`<path d="M4 2l18 9-7 3 7 7-3 3-7-7-3 7z" fill="#fff" stroke="#222"/>`, "a" + tri],
      [`<circle cx="13" cy="15" r="9" fill="#e0e0e0"/><path d="M10 3h6M13 3v3M2 25L24 3" stroke="#222"/>`, tri],
      [`<path d="M3 9l6-6 15 13-6 7z" fill="#ececec"/><path d="M3 9l6-6-8-1z" fill="#222"/><path d="M7 13l6-6M18 23l6-7" stroke="#222"/>`, tri],
      [`<path d="M3 3l21 21" stroke-width="5"/><path d="M3 3l21 21" stroke="#fff" stroke-width="2.500"/>`, tri + pink],
      [`<path d="M8 2l17 14-7 8L2 9z" fill="#ddd"/><path d="M13 6l-7 8" />`, ""],
      [`<circle cx="13" cy="13" r="4.500" fill="#222" stroke="none"/>`, ""],
      [`<path d="M9 5L3 11l6 6M3 11h13a6 6 0 010 13h-3" stroke-width="1.800"/>`, ""],
      [`<rect x="7" y="8" width="12" height="15" fill="#e3e3e3" stroke="none"/><path d="M5 7h16M10 7V3h6v4M6 7v17h14V7M11 11v9M15 11v9" />`, ""],
      [`<rect x="3" y="6" width="20" height="14" rx="1" fill="#d8d8d8"/><path d="M10 6V3h6v3M7 20l-1 5M19 20l1 5M13 20v3"/>`, tri + pink],
      [`<rect x="2" y="7" width="22" height="15" rx="1"/><path d="M7 7V4h6v3"/><circle cx="11" cy="14" r="5" fill="#777"/><circle cx="11" cy="14" r="2" fill="#222"/><circle cx="21" cy="10" r="1"/>`, ""],
      [`<rect x="4" y="4" width="18" height="21" rx="2"/><path d="M9 5V2h8v3M8 10h10M8 14h10M8 18h10"/>`, ""],
    ];
    this.attachShadow({ mode: "open" }).innerHTML = `
      <style>
        :host { position: absolute; left: 1842px; top: 108px; width: 34px; display: flex; flex-direction: column; align-items: center; }
        .nib { width: 34px; height: 34px; border-radius: 50%; background: #000; margin-bottom: 7px; flex: none; }
        svg { display: block; }
        .bar { width: 34px; box-sizing: border-box; background: #fff; border: 2px solid #fff; box-shadow: 0 2px 8px rgba(0,0,0,.35); }
        .c { height: 30px; display: flex; align-items: center; justify-content: center; position: relative; background: #fff; }
        .a { background: #2cb7e8; }
        .tri { position: absolute; right: 0; bottom: 0; width: 0; height: 0; border-left: 7px solid transparent; border-bottom: 7px solid #222; }
        .pink { position: absolute; right: -1px; top: -1px; width: 8px; height: 8px; border-radius: 50%; background: #ff0a80; }
        .pal { display: grid; grid-template-columns: 15px 15px; grid-template-rows: 15px 15px 30px; width: 30px; margin-top: 0; }
        .pal i:nth-child(1) { background: #00adef; } .pal i:nth-child(2) { background: #fff200; }
        .pal i:nth-child(3) { background: #ff0a80; } .pal i:nth-child(4) { background: #000; }
        .pal i:nth-child(5) { background: #ff0a80; grid-column: 1 / 3; }
      </style>
      <div class="nib"><svg width="34" height="34" viewBox="0 0 34 34"><path d="M17 7c5 .5 9.500 3 9.500 7 0 3-3.500 7-5.500 12h-8c-2-5-5.500-9-5.500-12 0-4 4.500-6.500 9.500-7z" fill="#fff"/><circle cx="17" cy="14" r="3.300" fill="#000"/><path d="M17 14v12" stroke="#000" stroke-width="2"/></svg></div>
      <div class="bar">
        ${cells.map(([b, extra]) => {
          const active = extra.startsWith("a");
          return `<div class="c ${active ? "a" : ""}">${ic(b)}${active ? extra.slice(1) : extra}</div>`;
        }).join("")}
        <div class="pal" style="margin-top:-1px"><i></i><i></i><i></i><i></i><i></i></div>
      </div>
    `;
  }
}

customElements.define("chrome-tabstrip", ChromeTabstrip);
customElements.define("chrome-toolbar", ChromeToolbar);
customElements.define("chrome-bookmarks", ChromeBookmarks);
customElements.define("miro-board", MiroBoard);
customElements.define("board-sketch", BoardSketch);
customElements.define("miro-title-panel", MiroTitlePanel);
customElements.define("miro-tools-panel", MiroToolsPanel);
customElements.define("miro-share-panel", MiroSharePanel);
customElements.define("miro-left-tools", MiroLeftTools);
customElements.define("miro-pen-panel", MiroPenPanel);
customElements.define("miro-corner-panels", MiroCornerPanels);
customElements.define("zoom-bar", ZoomBar);
customElements.define("share-banner", ShareBanner);
customElements.define("pen-toolbar", PenToolbar);
</script>
</body>
</html>
